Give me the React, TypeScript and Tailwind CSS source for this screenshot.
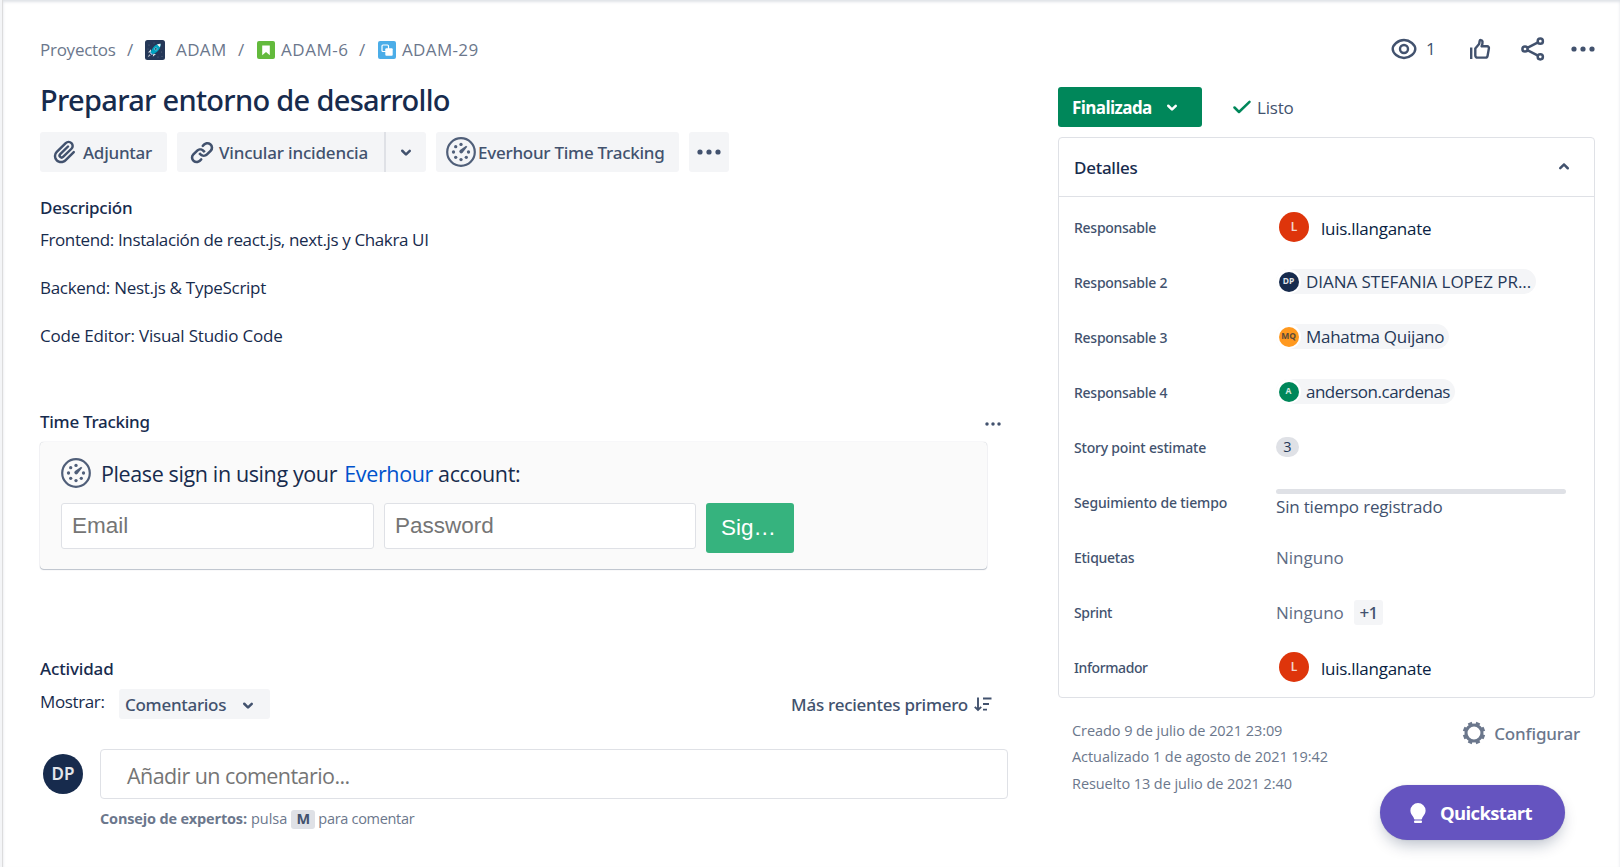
import type { ReactNode } from 'react';

const OPEN = "font-['Open_Sans','Noto_Sans',sans-serif]";
const SEMI = "font-['Noto_Sans',sans-serif] font-medium";

function Chevron({ up = false }: { up?: boolean }) {
  return (
    <svg viewBox="0 0 24 24" className={up ? 'size-[30px] shrink-0 rotate-180' : 'size-[30px] shrink-0'} fill="currentColor">
      <path d="M8.292 10.293a1.009 1.009 0 000 1.419l2.939 2.965c.218.215.5.322.779.322s.556-.107.769-.322l2.93-2.955a1.01 1.01 0 000-1.419.987.987 0 00-1.406 0l-2.298 2.317-2.307-2.327a.99.99 0 00-1.406 0z" />
    </svg>
  );
}

function Dots({ className }: { className: string }) {
  return (
    <svg viewBox="0 0 24 6" className={className} fill="currentColor">
      <circle cx="3" cy="3" r="2.6" />
      <circle cx="12" cy="3" r="2.6" />
      <circle cx="21" cy="3" r="2.6" />
    </svg>
  );
}

function Attachment() {
  return (
    <svg viewBox="0 0 24 24" className="size-[30px] shrink-0" fill="currentColor">
      <path d="M11.643 17.965c-1.53 1.495-4.016 1.496-5.542.004a3.773 3.773 0 01.002-5.412l7.147-6.985a2.316 2.316 0 013.233-.003c.893.873.895 2.282.004 3.153l-6.703 6.55a.653.653 0 01-.914-.008.62.62 0 010-.902l6.229-6.087a.941.941 0 000-1.353.995.995 0 00-1.384 0l-6.23 6.087a2.502 2.502 0 000 3.607 2.643 2.643 0 003.683.009l6.703-6.55a4.074 4.074 0 00-.003-5.859 4.306 4.306 0 00-6.002.003l-7.148 6.985a5.655 5.655 0 00-.001 8.118c2.29 2.239 6.015 2.238 8.31-.005l6.686-6.533a.941.941 0 000-1.353.995.995 0 00-1.384 0l-6.686 6.534z" />
    </svg>
  );
}

function LinkIcon() {
  return (
    <svg viewBox="0 0 24 24" className="size-[30px] shrink-0" fill="currentColor">
      <path d="M12.856 5.457l-.937.92a1.002 1.002 0 000 1.437 1.047 1.047 0 001.463 0l.984-.966c.967-.95 2.542-1.135 3.602-.288a2.54 2.54 0 01.203 3.81l-2.903 2.852a2.646 2.646 0 01-3.696 0l-1.11-1.09L9 13.57l1.108 1.089c1.822 1.788 4.802 1.788 6.622 0l2.905-2.852a4.558 4.558 0 00-.357-6.82c-1.893-1.517-4.695-1.226-6.422.47" />
      <path d="M11.144 19.543l.937-.92a1.002 1.002 0 000-1.437 1.047 1.047 0 00-1.462 0l-.985.966c-.967.95-2.542 1.135-3.602.288a2.54 2.54 0 01-.203-3.81l2.903-2.852a2.646 2.646 0 013.696 0l1.11 1.09L15 11.43l-1.108-1.089c-1.822-1.788-4.802-1.788-6.622 0l-2.905 2.852a4.558 4.558 0 00.357 6.82c1.893 1.517 4.695 1.226 6.422-.47" />
    </svg>
  );
}

function Gauge() {
  return (
    <svg viewBox="0 0 30 30" className="size-[30px] shrink-0 text-[#505f79]" fill="currentColor">
      <circle cx="15" cy="15" r="13.8" fill="none" stroke="currentColor" strokeWidth="2.2" />
      <circle cx="15" cy="7.4" r="1.65" />
      <circle cx="9.7" cy="9.7" r="1.65" />
      <circle cx="7.5" cy="15" r="1.65" />
      <circle cx="9.7" cy="20.3" r="1.65" />
      <circle cx="15" cy="22.6" r="1.65" />
      <circle cx="20.3" cy="20.3" r="1.65" />
      <circle cx="22.5" cy="15" r="1.65" />
      <path d="M20.1 8.8l1.200 1-4.700 5.900a1.900 1.900 0 01-2.800.100 1.900 1.900 0 01.200-2.700z" />
    </svg>
  );
}

function Rocket() {
  return (
    <svg viewBox="0 0 20 20" className="size-5 shrink-0">
      <rect width="20" height="20" rx="2.5" fill="#253858" />
      <g fill="#5e6c84">
        <circle cx="4" cy="5" r=".6" />
        <circle cx="9" cy="3" r=".5" />
        <circle cx="16.5" cy="12" r=".6" />
        <circle cx="13" cy="17" r=".6" />
        <circle cx="17" cy="16.5" r=".5" />
        <circle cx="3" cy="9" r=".5" />
      </g>
      <path d="M6 9.2L3 12.6l3-.4zM11 14l-3.200 2.700.5-3z" fill="#dfe1e6" />
      <path d="M15.600 3.800c-3-.1-5.700 1.300-7.800 4.200L5.300 12.200l2.500 2.400 4-2.500c2.700-2.200 4-5 3.800-8.300z" fill="#00a3bf" />
      <path d="M15.600 3.800c-1.300 0-2.500.2-3.600.7l2.900 2.800c.5-1 .7-2.200.7-3.500z" fill="#f4f5f7" />
      <path d="M5.300 12.200l2.500 2.400-1 .4-2-1.900z" fill="#b3d4ff" />
      <circle cx="10.800" cy="8.900" r="1.300" fill="#253858" stroke="#79e2f2" strokeWidth=".7" />
      <path d="M4.200 14.200l-1.500 3 2.900-1.600z" fill="#b3bac5" />
    </svg>
  );
}

function Eye() {
  return (
    <svg viewBox="0 0 26 22" className="h-[22px] w-[26px] shrink-0" fill="none" stroke="currentColor" strokeWidth="2.400">
      <path d="M13 2c-6 0-11.300 5-11.300 9S7 20 13 20s11.300-5 11.300-9S19 2 13 2z" />
      <circle cx="13" cy="11" r="4" />
    </svg>
  );
}

function ThumbsUp() {
  return (
    <svg viewBox="0 0 22 22" className="size-[22px] shrink-0" fill="none" stroke="currentColor" strokeWidth="2.400">
      <path d="M2.200 9.500V21" />
      <path d="M6.300 10.500l3.600-4.200c.5-.8.6-2 .7-3.100.2-1.600 2.700-1.500 2.900.3.200 1.500-.2 3.200-.9 4.800h5.500c1.400 0 2 .9 1.800 2.100l-1.300 7.300c-.2 1.100-.9 1.900-2.100 1.900H8.500c-1.300 0-2.200-.8-2.200-2.100z" strokeLinejoin="round" />
    </svg>
  );
}

function Share() {
  return (
    <svg viewBox="0 0 24 24" className="size-6 shrink-0" fill="none" stroke="currentColor" strokeWidth="2.500">
      <circle cx="4" cy="12" r="2.600" />
      <circle cx="19.300" cy="4.200" r="2.600" />
      <circle cx="19.300" cy="19.800" r="2.600" />
      <path d="M6.300 10.800L17 5.400M6.300 13.200L17 18.600" />
    </svg>
  );
}

function Gear() {
  return (
    <svg viewBox="0 0 24 24" className="size-6 shrink-0" fill="none" stroke="currentColor">
      <circle cx="12" cy="12" r="8" strokeWidth="3.100" />
      <g strokeWidth="4.200">
        {[22.5, 67.5, 112.5, 157.5, 202.5, 247.5, 292.5, 337.5].map((a) => (
          <path key={a} d="M12 .8v3.400" transform={`rotate(${a} 12 12)`} />
        ))}
      </g>
    </svg>
  );
}

function ToolButton({ className, children }: { className: string; children: ReactNode }) {
  return (
    <button className={`flex h-10 items-center rounded-[3px] bg-[#f4f5f7] text-[17px] whitespace-nowrap text-[#42526e] ${SEMI} ${className}`}>
      {children}
    </button>
  );
}

function Person() {
  return (
    <div className="ml-[3px] flex items-center pb-px">
      <span className="flex size-[30px] items-center justify-center rounded-full bg-[#de350b] font-['Noto_Sans',sans-serif] text-[12px] font-semibold text-[#f4d5cd]">L</span>
      <span className="ml-3 pt-[3px] text-[17px] tracking-[-0.26px] text-[#091e42]">luis.llanganate</span>
    </div>
  );
}

function Chip({ initials, avatar, label, tracking }: { initials: string; avatar: string; label: string; tracking: string }) {
  return (
    <div className="mb-[2px] flex h-[25px] items-center rounded-full bg-[#f4f5f7] pr-[5px]">
      <span className="flex size-[25px] items-center justify-center rounded-full bg-white">
        <span className={`flex size-5 items-center justify-center rounded-full font-['Noto_Sans',sans-serif] text-[8.5px] font-bold ${avatar}`}>{initials}</span>
      </span>
      <span className={`ml-[5px] text-[17px] whitespace-nowrap text-[#253858] ${tracking}`}>{label}</span>
    </div>
  );
}

function Row({ label, tracking = 'tracking-[-0.27px]', children }: { label: string; tracking?: string; children: ReactNode }) {
  return (
    <div className="flex h-[55px] items-center">
      <div className={`w-[202px] shrink-0 text-[14px] whitespace-nowrap text-[#42526e] ${SEMI} ${tracking}`}>{label}</div>
      <div className="flex flex-1 items-center">{children}</div>
    </div>
  );
}

function Breadcrumbs() {
  return (
    <nav className="flex h-6 items-center text-[17px] text-[#6b778c]">
      <span className="w-[87px] tracking-[-0.26px]">Proyectos</span>
      <span className="w-[18px]">/</span>
      <Rocket />
      <span className="ml-[11px] w-[62px] tracking-[0.39px]">ADAM</span>
      <span className="w-[19px]">/</span>
      <svg viewBox="0 0 18 18" className="size-[18px] shrink-0">
        <rect width="18" height="18" rx="2" fill="#63ba3c" />
        <path d="M5.200 4.500h7.600v9.700L9 11l-3.800 3.200z" fill="#fff" />
      </svg>
      <span className="ml-[6px] w-[78px] tracking-[0.55px]">ADAM-6</span>
      <span className="w-[19px]">/</span>
      <svg viewBox="0 0 18 18" className="size-[18px] shrink-0">
        <rect width="18" height="18" rx="2" fill="#4bade8" />
        <rect x="4" y="4" width="6.500" height="6.500" rx="1" fill="none" stroke="#fff" strokeWidth="1.200" />
        <rect x="7.300" y="7.300" width="7.400" height="7.400" rx="1" fill="#fff" />
      </svg>
      <span className="ml-[6px] tracking-[0.35px]">ADAM-29</span>
    </nav>
  );
}

function TimeTracking() {
  return (
    <section className="mt-[62px]">
      <div className="flex h-6 items-center justify-between pr-[7px]">
        <h2 className={`text-[17px] tracking-[-0.28px] text-[#172b4d] ${SEMI}`}>Time Tracking</h2>
        <Dots className="mt-[3px] h-1 w-4 text-[#42526e]" />
      </div>
      <div className="mt-[8px] h-[127px] w-[947px] rounded-[4px] bg-[#fafafa] px-[21px] pt-4 shadow-[0_1px_1px_rgba(9,30,66,0.25),0_0_1px_rgba(9,30,66,0.31)]">
        <div className="flex h-[30px] items-center">
          <Gauge />
          <p className="ml-[10px] pt-[3px] text-[21.5px] tracking-[-0.38px] whitespace-nowrap text-[#172b4d]">
            Please sign in using your <a className="ml-[2px] text-[#0052cc]">Everhour</a> account:
          </p>
        </div>
        <div className="mt-[15px] flex items-start gap-[10px] font-['Liberation_Sans',Arial,sans-serif] text-[22.5px]">
          <div className="flex h-[46px] w-[313px] items-center rounded-[3px] border border-[#dfe1e6] bg-white pb-px pl-[10px] text-[#757575]">Email</div>
          <div className="flex h-[46px] w-[312px] items-center rounded-[3px] border border-[#dfe1e6] bg-white pb-px pl-[10px] text-[#757575]">Password</div>
          <button className="flex h-[50px] w-[88px] items-center rounded-[3px] bg-[#36b37e] pb-px pl-[15px] text-white">Sig…</button>
        </div>
      </div>
    </section>
  );
}

function Activity() {
  return (
    <section className="mt-[88px]">
      <h2 className={`h-6 text-[17px] leading-6 tracking-[-0.15px] text-[#172b4d] ${SEMI}`}>Actividad</h2>
      <div className="mt-[8px] flex h-[30px] items-center">
        <span className="mb-[4px] w-[79px] text-[17px] tracking-[-0.37px] text-[#172b4d]">Mostrar:</span>
        <button className={`flex h-[30px] w-[151px] items-center rounded-[3px] bg-[#f4f5f7] pt-px pl-[6px] text-[17px] tracking-[-0.29px] text-[#42526e] ${SEMI}`}>
          <span className="w-[108px] text-left">Comentarios</span>
          <Chevron />
        </button>
        <span className={`ml-auto pt-px text-[17px] tracking-[-0.26px] text-[#42526e] ${SEMI}`}>Más recientes primero</span>
        <svg viewBox="0 0 18 15" className="mr-[16px] ml-[6px] h-[15px] w-[18px] shrink-0 text-[#42526e]" fill="none" stroke="currentColor" strokeWidth="1.900">
          <path d="M4 .5v12M.8 9.800L4 13l3.200-3.200" />
          <path d="M9 1.500h8.500M9 7h6M9 12.600h4" />
        </svg>
      </div>
      <div className="mt-[30px] flex">
        <span className="mt-[5px] ml-[3px] flex size-10 shrink-0 items-center justify-center rounded-full bg-[#172b4d] font-['Noto_Sans',sans-serif] text-[17px] font-semibold text-[#e3e6eb]">DP</span>
        <div className="ml-[17px] flex-1">
          <div className="flex h-[50px] items-center rounded-[4px] border border-[#dfe1e6] bg-white pt-1 pl-[26px] text-[21.5px] tracking-[-0.57px] text-[#757575]">Añadir un comentario...</div>
          <div className="mt-[10px] flex h-5 items-center text-[14.5px] text-[#6b778c]">
            <b className="tracking-[-0.16px]">Consejo de expertos:</b>
            <span className="ml-1">pulsa</span>
            <span className="mr-[3px] ml-1 flex h-[19px] w-6 items-center justify-center rounded-[3px] bg-[#dfe1e6] font-bold text-[#42526e]">M</span>
            <span className="tracking-[-0.3px]">para comentar</span>
          </div>
        </div>
      </div>
    </section>
  );
}

function Details() {
  return (
    <section className="mt-[10px] h-[561px] w-[537px] rounded-[4px] border border-[#dfe1e6]">
      <div className="flex h-[59px] items-center justify-between border-b border-[#dfe1e6] pr-[15px] pl-[15px]">
        <h2 className={`pt-px text-[17px] tracking-[-0.27px] text-[#172b4d] ${SEMI}`}>Detalles</h2>
        <Chevron up />
      </div>
      <div className="pt-[3px] pl-[15px]">
        <Row label="Responsable"><Person /></Row>
        <Row label="Responsable 2"><Chip initials="DP" avatar="bg-[#172b4d] text-[#dfe1e6]" label="DIANA STEFANIA LOPEZ PR..." tracking="tracking-[-0.04px]" /></Row>
        <Row label="Responsable 3"><Chip initials="MQ" avatar="bg-[#ff991f] text-[#5a4a3a]" label="Mahatma Quijano" tracking="tracking-[-0.3px]" /></Row>
        <Row label="Responsable 4"><Chip initials="A" avatar="bg-[#00875a] text-[#cfe8df]" label="anderson.cardenas" tracking="tracking-[-0.5px]" /></Row>
        <Row label="Story point estimate" tracking="tracking-[-0.2px]">
          <span className="mb-[2px] flex h-5 w-[23px] items-center justify-center rounded-full bg-[#dfe1e6] text-[14.5px] text-[#253858]">3</span>
        </Row>
        <Row label="Seguimiento de tiempo" tracking="tracking-[-0.16px]">
          <div className="mt-[3px] w-[290px]">
            <div className="h-[5px] rounded-[3px] bg-[#dfe1e6]" />
            <div className="mt-px h-6 text-[17px] leading-6 tracking-[-0.18px] text-[#42526e]">Sin tiempo registrado</div>
          </div>
        </Row>
        <Row label="Etiquetas"><span className="text-[17px] text-[#5e6c84]">Ninguno</span></Row>
        <Row label="Sprint" tracking="tracking-[-0.36px]">
          <span className="w-[78px] text-[17px] text-[#5e6c84]">Ninguno</span>
          <span className={`flex h-[25px] w-[29px] items-center justify-center rounded-[3px] bg-[#f4f5f7] text-[17px] tracking-[-0.6px] text-[#42526e] ${SEMI}`}>+1</span>
        </Row>
        <Row label="Informador" tracking="tracking-[-0.4px]"><Person /></Row>
      </div>
    </section>
  );
}

export default function App() {
  return (
    <div className={`relative h-[867px] w-full overflow-hidden bg-[#f4f5f7] pl-[2px] ${OPEN}`}>
      <div className="flex h-full border-l border-[#dcdcdd] bg-white shadow-[inset_0_2px_3px_rgba(9,30,66,0.13)]">
        <main className="ml-[37px] w-[968px] shrink-0 pt-[38px]">
          <Breadcrumbs />
          <h1 className="mt-[16px] h-11 font-['Noto_Sans',sans-serif] text-[29px] leading-[44px] font-medium tracking-[-0.69px] whitespace-nowrap text-[#172b4d]">Preparar entorno de desarrollo</h1>
          <div className="mt-[10px] flex gap-[10px]">
            <ToolButton className="w-[127px] pl-[10px] tracking-[-0.26px]"><Attachment /><span className="ml-[3px] pt-px">Adjuntar</span></ToolButton>
            <div className="flex">
              <ToolButton className="w-[207px] rounded-r-none pl-[10px] tracking-[-0.18px]"><LinkIcon /><span className="ml-[2px] pt-px">Vincular incidencia</span></ToolButton>
              <ToolButton className="w-[42px] justify-center rounded-l-none border-l-2 border-[#dfe1e6] pr-px"><Chevron /></ToolButton>
            </div>
            <ToolButton className="w-[243px] pl-[10px] tracking-[-0.25px]"><Gauge /><span className="ml-[2px] pt-px">Everhour Time Tracking</span></ToolButton>
            <ToolButton className="w-10 justify-center"><Dots className="h-[6px] w-6" /></ToolButton>
          </div>
          <section className="mt-[24px] text-[17px] text-[#172b4d]">
            <h2 className={`h-6 leading-6 tracking-[-0.25px] ${SEMI}`}>Descripción</h2>
            <p className="mt-[8px] leading-6 tracking-[-0.37px]">Frontend: Instalación de react.js, next.js y Chakra UI</p>
            <p className="mt-6 leading-6 tracking-[-0.29px]">Backend: Nest.js &amp; TypeScript</p>
            <p className="mt-6 leading-6 tracking-[-0.2px]">Code Editor: Visual Studio Code</p>
          </section>
          <TimeTracking />
          <Activity />
        </main>
        <aside className="ml-[50px] w-[537px] shrink-0 pt-[37px] text-[#42526e]">
          <div className="flex h-6 items-center justify-end">
            <Eye />
            <span className="ml-[9px] w-[43px] text-[17px]">1</span>
            <ThumbsUp />
            <span className="w-[30px]" />
            <Share />
            <Dots className="ml-[26px] h-[6px] w-6" />
          </div>
          <div className="mt-[26px] flex h-10 items-center">
            <button className="flex h-10 w-36 items-center rounded-[3px] bg-[#00875a] pl-[14px] text-[17px] font-bold tracking-[-0.62px] text-white">
              <span className="w-[85px] pt-px text-left">Finalizada</span>
              <Chevron />
            </button>
            <svg viewBox="0 0 18 14" className="ml-[31px] h-[14px] w-[18px]" fill="none" stroke="#00875a" strokeWidth="2.500" strokeLinecap="round" strokeLinejoin="round">
              <path d="M1.500 7.500L6 12 16.500 1.800" />
            </svg>
            <span className="ml-[6px] pt-px text-[17px] tracking-[-0.2px]">Listo</span>
          </div>
          <Details />
          <div className="flex justify-between pr-[15px] pl-[14px] text-[#6b778c]">
            <div className="mt-[20px] text-[14.5px] leading-[26.3px] tracking-[-0.07px]">
              <p>Creado 9 de julio de 2021 23:09</p>
              <p>Actualizado 1 de agosto de 2021 19:42</p>
              <p>Resuelto 13 de julio de 2021 2:40</p>
            </div>
            <button className={`mt-[23px] flex h-6 items-center text-[17px] tracking-[-0.17px] ${SEMI}`}>
              <Gear />
              <span className="ml-[8px] pt-px">Configurar</span>
            </button>
          </div>
        </aside>
      </div>
      <button className="absolute top-[785px] left-[1380px] flex h-[55px] w-[185px] items-center rounded-full bg-[#6554c0] pl-[30px] text-[18.5px] font-bold tracking-[-0.65px] text-white shadow-[0_8px_16px_-4px_rgba(9,30,66,0.3),0_0_1px_rgba(9,30,66,0.3)]">
        <svg viewBox="0 0 16 20" className="h-5 w-4" fill="#fff">
          <path d="M8 0a7.600 7.600 0 017.600 7.500c0 2.600-1.200 4.300-2.400 5.800-.7.900-1 1.600-1.200 2.500-.1.500-.3.700-.8.700H4.800c-.5 0-.7-.2-.8-.7-.2-.9-.5-1.600-1.200-2.500C1.600 11.800.4 10.100.4 7.500A7.600 7.600 0 018 0z" />
          <rect x="4" y="17.500" width="8" height="2.400" rx="1" />
        </svg>
        <span className="ml-[14px] pt-px">Quickstart</span>
      </button>
    </div>
  );
}
